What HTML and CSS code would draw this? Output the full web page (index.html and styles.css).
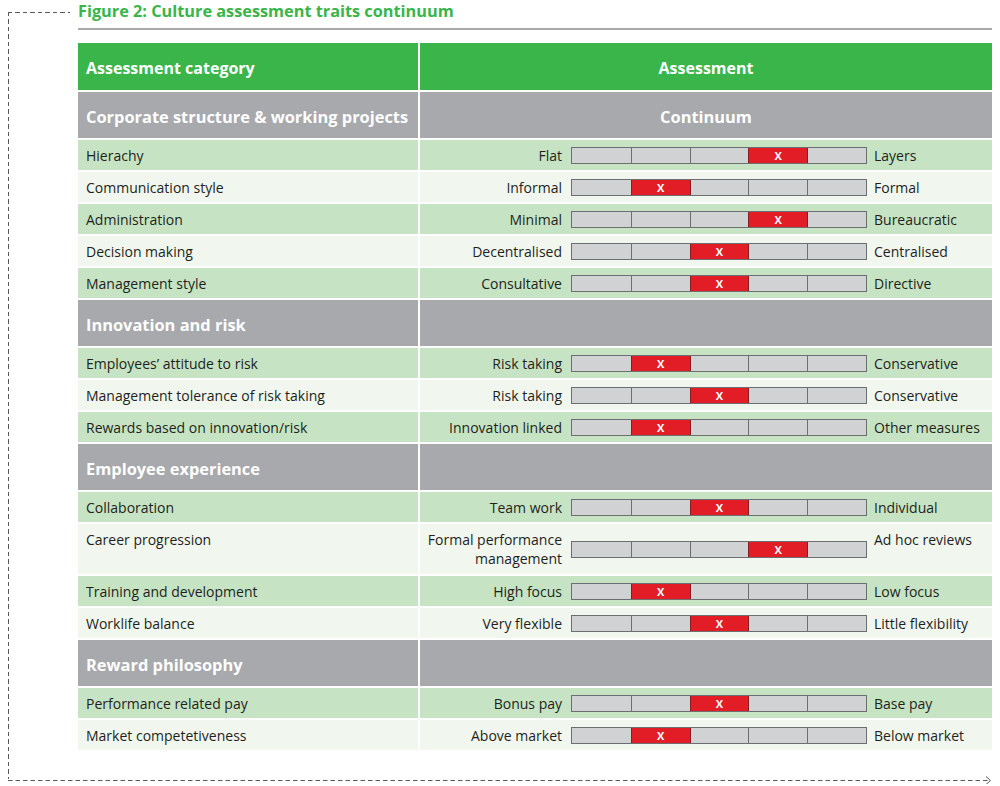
FILE: index.html
```html
<!DOCTYPE html>
<html lang="en">
<head>
<meta charset="utf-8">
<title>Figure 2: Culture assessment traits continuum</title>
<link rel="stylesheet" href="styles.css">
</head>
<body>
<div class="frame">
  <h1 class="title">Figure 2: Culture assessment traits continuum</h1>
  <div class="rule"></div>
  <div class="table">
    <div class="cell head">Assessment category</div>
    <div class="cell head center">Assessment</div>

    <div class="cell section">Corporate structure &amp; working projects</div>
    <div class="cell section center">Continuum</div>

    <div class="cell cat g">Hierachy</div>
    <div class="cell assess g"><span class="lbl">Flat</span><div class="bar"><i></i><i></i><i></i><i class="x">X</i><i></i></div><span class="rlbl">Layers</span></div>
    <div class="cell cat l">Communication style</div>
    <div class="cell assess l"><span class="lbl">Informal</span><div class="bar"><i></i><i class="x">X</i><i></i><i></i><i></i></div><span class="rlbl">Formal</span></div>
    <div class="cell cat g">Administration</div>
    <div class="cell assess g"><span class="lbl">Minimal</span><div class="bar"><i></i><i></i><i></i><i class="x">X</i><i></i></div><span class="rlbl">Bureaucratic</span></div>
    <div class="cell cat l">Decision making</div>
    <div class="cell assess l"><span class="lbl">Decentralised</span><div class="bar"><i></i><i></i><i class="x">X</i><i></i><i></i></div><span class="rlbl">Centralised</span></div>
    <div class="cell cat g">Management style</div>
    <div class="cell assess g"><span class="lbl">Consultative</span><div class="bar"><i></i><i></i><i class="x">X</i><i></i><i></i></div><span class="rlbl">Directive</span></div>

    <div class="cell section">Innovation and risk</div>
    <div class="cell section"></div>

    <div class="cell cat g">Employees’ attitude to risk</div>
    <div class="cell assess g"><span class="lbl">Risk taking</span><div class="bar"><i></i><i class="x">X</i><i></i><i></i><i></i></div><span class="rlbl">Conservative</span></div>
    <div class="cell cat l">Management tolerance of risk taking</div>
    <div class="cell assess l"><span class="lbl">Risk taking</span><div class="bar"><i></i><i></i><i class="x">X</i><i></i><i></i></div><span class="rlbl">Conservative</span></div>
    <div class="cell cat g">Rewards based on innovation/risk</div>
    <div class="cell assess g"><span class="lbl">Innovation linked</span><div class="bar"><i></i><i class="x">X</i><i></i><i></i><i></i></div><span class="rlbl">Other measures</span></div>

    <div class="cell section">Employee experience</div>
    <div class="cell section"></div>

    <div class="cell cat g">Collaboration</div>
    <div class="cell assess g"><span class="lbl">Team work</span><div class="bar"><i></i><i></i><i class="x">X</i><i></i><i></i></div><span class="rlbl">Individual</span></div>
    <div class="cell cat l tall">Career progression</div>
    <div class="cell assess l tall"><span class="lbl">Formal performance<br>management</span><div class="bar"><i></i><i></i><i></i><i class="x">X</i><i></i></div><span class="rlbl top">Ad hoc reviews</span></div>
    <div class="cell cat g">Training and development</div>
    <div class="cell assess g"><span class="lbl">High focus</span><div class="bar"><i></i><i class="x">X</i><i></i><i></i><i></i></div><span class="rlbl">Low focus</span></div>
    <div class="cell cat l">Worklife balance</div>
    <div class="cell assess l"><span class="lbl">Very flexible</span><div class="bar"><i></i><i></i><i class="x">X</i><i></i><i></i></div><span class="rlbl">Little flexibility</span></div>

    <div class="cell section">Reward philosophy</div>
    <div class="cell section"></div>

    <div class="cell cat g">Performance related pay</div>
    <div class="cell assess g"><span class="lbl">Bonus pay</span><div class="bar"><i></i><i></i><i class="x">X</i><i></i><i></i></div><span class="rlbl">Base pay</span></div>
    <div class="cell cat l">Market competetiveness</div>
    <div class="cell assess l"><span class="lbl">Above market</span><div class="bar"><i></i><i class="x">X</i><i></i><i></i><i></i></div><span class="rlbl">Below market</span></div>
  </div>
  <svg class="foot" width="984" height="9" viewBox="0 0 984 9" aria-hidden="true">
    <line x1="0" y1="5.5" x2="981" y2="5.5" stroke="#58595b" stroke-width="1" stroke-dasharray="4.5 3"/>
    <polyline points="978,1.5 982.5,5.5 978,9.5" fill="none" stroke="#58595b" stroke-width="1"/>
  </svg>
</div>
</body>
</html>
```

FILE: styles.css
```css
* { box-sizing: border-box; }

html, body {
  margin: 0;
  padding: 0;
  background: #ffffff;
}

body {
  font-family: "Open Sans", "Noto Sans", sans-serif;
  color: #231f20;
}

.frame {
  margin-left: 8px;
  width: 984px;
  height: 784px;
  display: flex;
  flex-direction: column;
  background-image:
    repeating-linear-gradient(to bottom, #58595b 0 4.5px, transparent 4.5px 7.5px),
    repeating-linear-gradient(to right, #58595b 0 4.5px, transparent 4.5px 7.5px);
  background-repeat: no-repeat;
  background-position: 0 12px, 0 12px;
  background-size: 1px 767px, 62px 1px;
}

.title {
  margin: 0 0 0 70px;
  font-size: 16.3px;
  line-height: 22px;
  font-weight: 700;
  color: #39b54a;
  white-space: nowrap;
}

.rule {
  margin: 6px 0 0 70px;
  width: 914px;
  height: 2px;
  background: #a7a9ac;
}

.table {
  margin: 13px 0 0 70px;
  width: 914px;
  display: grid;
  grid-template-columns: 340px 572px;
  gap: 2px;
}

.cell {
  display: flex;
  align-items: center;
  font-size: 14px;
  line-height: 19px;
}

.head {
  height: 47px;
  background: #39b54a;
  color: #ffffff;
  font-weight: 700;
  font-size: 16px;
  padding: 3px 0 0 8px;
}

.section {
  height: 46px;
  background: #a7a9ac;
  color: #ffffff;
  font-weight: 700;
  font-size: 16.4px;
  padding: 2px 0 0 8px;
}

.center {
  justify-content: center;
  padding-left: 0;
}

.g { background: #c6e4c3; }
.l { background: #f1f7ef; }

.cat {
  height: 30px;
  padding-left: 8px;
}

.cat.tall {
  height: 50px;
  align-items: flex-start;
  padding-top: 6px;
}

.assess {
  height: 30px;
  display: grid;
  grid-template-columns: 143px 296px 1fr;
  column-gap: 8px;
  align-items: center;
}

.assess.tall {
  height: 50px;
}

.lbl {
  text-align: right;
  white-space: nowrap;
  margin-right: 1px;
}

.rlbl {
  margin-left: -1px;
  white-space: nowrap;
}

.rlbl.top {
  align-self: start;
  padding-top: 6px;
}

.bar {
  height: 17px;
  display: grid;
  grid-template-columns: repeat(5, 1fr);
  border: 1px solid #6d6e71;
  background: #d1d2d4;
}

.bar i {
  display: block;
  border-left: 1px solid #6d6e71;
  font-style: normal;
}

.bar i:first-child {
  border-left: none;
}

.bar .x {
  background: #e21d25;
  border-left-color: #8a1b1f;
  color: #ffffff;
  font-size: 11px;
  font-weight: 700;
  line-height: 15px;
  text-align: center;
}

.bar .x + i {
  border-left-color: #8a1b1f;
}

.foot {
  margin-top: auto;
  display: block;
}
```
